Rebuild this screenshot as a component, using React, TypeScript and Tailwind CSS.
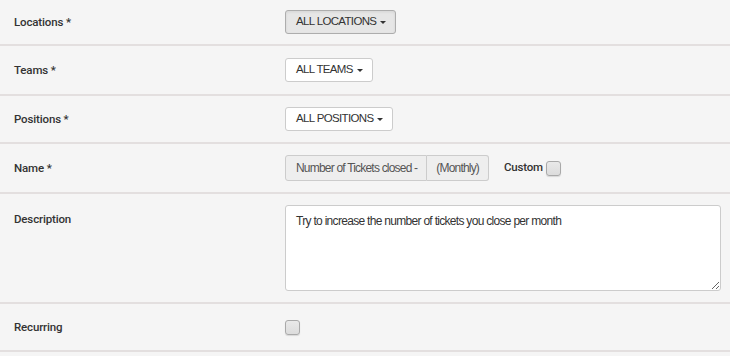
import React from "react";

const labelCls =
  "w-[285px] shrink-0 pl-[14px] pt-[2px] text-[11.5px] font-medium tracking-[-0.15px] text-[#333] font-[Roboto,Liberation_Sans,sans-serif]";

const bodyFont = "font-['Liberation_Sans',Arial,sans-serif] text-[12px] tracking-[-0.7px]";

function Caret() {
  return (
    <span className="ml-[4px] inline-block h-0 w-0 border-x-[3.5px] border-t-[3.5px] border-x-transparent border-t-[#333] align-middle" />
  );
}

function DropBtn({ text, active }: { text: string; active?: boolean }) {
  return (
    <button
      className={
        "flex h-[24px] items-center rounded-[3px] border pl-[10px] pr-[9px] font-['Liberation_Sans',Arial,sans-serif] text-[11.5px] tracking-[-0.65px] text-[#333] " +
        (active ? "border-[#adadad] bg-[#e6e6e6] shadow-[inset_0_1px_3px_rgba(0,0,0,0.08)]" : "border-[#ccc] bg-white")
      }
    >
      {text}
      <Caret />
    </button>
  );
}

function Checkbox() {
  return (
    <span className="inline-block h-[15px] w-[15px] rounded-[3px] border border-[#a9a9a9] bg-gradient-to-b from-[#e9e9e9] to-[#dcdcdc] shadow-[0_1px_1px_rgba(0,0,0,0.12)]" />
  );
}

function Row({ h, label, children }: { h: string; label: string; children?: React.ReactNode }) {
  return (
    <div className={"flex items-center border-b-2 border-[#e3dfdf] " + h}>
      <div className={labelCls}>{label}</div>
      <div className="flex items-center">{children}</div>
    </div>
  );
}

export default function App() {
  return (
    <div className="h-[356px] w-[730px] overflow-hidden bg-[#f5f5f5] font-['Liberation_Sans',Arial,sans-serif]">
      <Row h="h-[46px]" label="Locations *">
        <DropBtn text="ALL LOCATIONS" active />
      </Row>
      <Row h="h-[50px]" label="Teams *">
        <DropBtn text="ALL TEAMS" />
      </Row>
      <Row h="h-[48px]" label="Positions *">
        <DropBtn text="ALL POSITIONS" />
      </Row>
      <Row h="h-[50px]" label="Name *">
        <div className="flex h-[26px] font-['Liberation_Sans',Arial,sans-serif] text-[12px] tracking-[-0.8px] text-[#555]">
          <div className="flex items-center rounded-l-[3px] border border-[#ccc] bg-[#eee] pl-[10px] pr-[9px]">
            Number of Tickets closed -
          </div>
          <div className="flex items-center rounded-r-[3px] border border-l-0 border-[#ccc] bg-[#eee] px-[9px]">
            (Monthly)
          </div>
        </div>
        <span className="ml-[15px] mr-[3px] text-[11.5px] font-medium tracking-[-0.2px] text-[#333] font-[Roboto,Liberation_Sans,sans-serif]">
          Custom
        </span>
        <Checkbox />
      </Row>
      <div className="flex h-[110px] items-start border-b-2 border-[#e3dfdf] pt-[11px]">
        <div className={labelCls + " !pt-[6px]"}>Description</div>
        <textarea
          className={
            "h-[86px] w-[436px] resize rounded-[3px] border border-[#ccc] bg-white px-[10px] py-[6px] text-[#333] outline-none " +
            bodyFont
          }
          defaultValue="Try to increase the number of tickets you close per month"
        />
      </div>
      <Row h="h-[48px]" label="Recurring">
        <Checkbox />
      </Row>
    </div>
  );
}
